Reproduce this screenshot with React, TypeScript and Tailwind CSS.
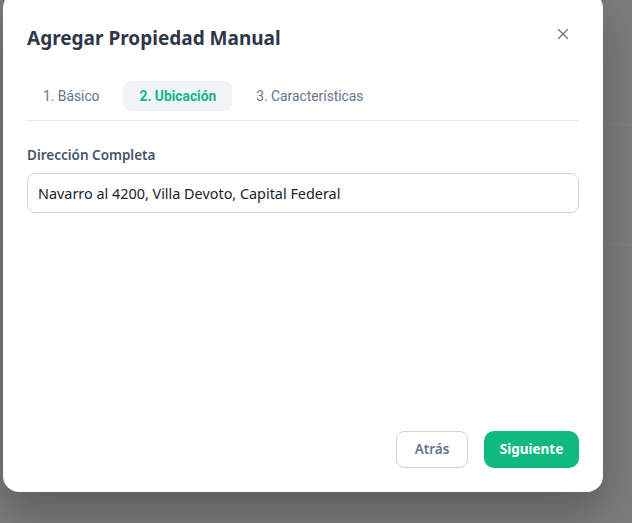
import { X } from 'lucide-react';

const tabs = ['1. Básico', '2. Ubicación', '3. Características'];

export default function App() {
  const active = 1;
  return (
    <div className="relative h-[523px] w-[632px] overflow-hidden bg-[#7b7c7e] font-['Noto_Sans',sans-serif]">
      <div className="absolute left-0 top-[124px] h-px w-full border-t border-dashed border-[#838486]" />
      <div className="absolute left-0 top-[244px] h-px w-full border-t border-dashed border-[#838486]" />
      <div className="relative ml-[3px] mt-[-8px] flex h-[500px] w-[600px] flex-col rounded-2xl bg-white px-6 pb-6 pt-8 shadow-[0_20px_40px_rgba(0,0,0,0.25)]">
        <div className="flex items-center justify-between">
          <h2 className="text-[19px] font-bold leading-7 text-[#2d3748]">Agregar Propiedad Manual</h2>
          <button type="button" className="relative -top-[4px] mr-[7px] text-[#64748b]">
            <X size={18} strokeWidth={1.75} />
          </button>
        </div>

        <div className="mt-[29px] flex gap-2 border-b border-[#e2e8f0] pb-[9px]">
          {tabs.map((t, i) => (
            <button
              key={t}
              type="button"
              className={[
                "h-[30px] rounded-lg px-4 font-['Roboto',sans-serif] text-[13.8px]",
                i === active ? 'bg-[#f1f5f9] font-bold text-[#10b981]' : 'text-[#64748b]',
              ].join(' ')}
            >
              {t}
            </button>
          ))}
        </div>

        <label className="mt-6 text-[13.5px] font-semibold leading-5 text-[#475569]">Dirección Completa</label>
        <input
          className="mt-2 h-10 w-full rounded-lg border border-[#cbd5e1] px-[10px] text-[14.4px] text-[#1a202c] outline-none"
          defaultValue="Navarro al 4200, Villa Devoto, Capital Federal"
        />

        <div className="mt-auto flex justify-end gap-4">
          <button
            type="button"
            className="h-[37px] w-[72px] rounded-lg border border-[#cbd5e1] text-[13.5px] font-semibold text-[#64748b]"
          >
            Atrás
          </button>
          <button
            type="button"
            className="h-[37px] w-[95px] rounded-[10px] bg-[#10b981] text-[13.5px] font-bold text-white"
          >
            Siguiente
          </button>
        </div>
      </div>
    </div>
  );
}
